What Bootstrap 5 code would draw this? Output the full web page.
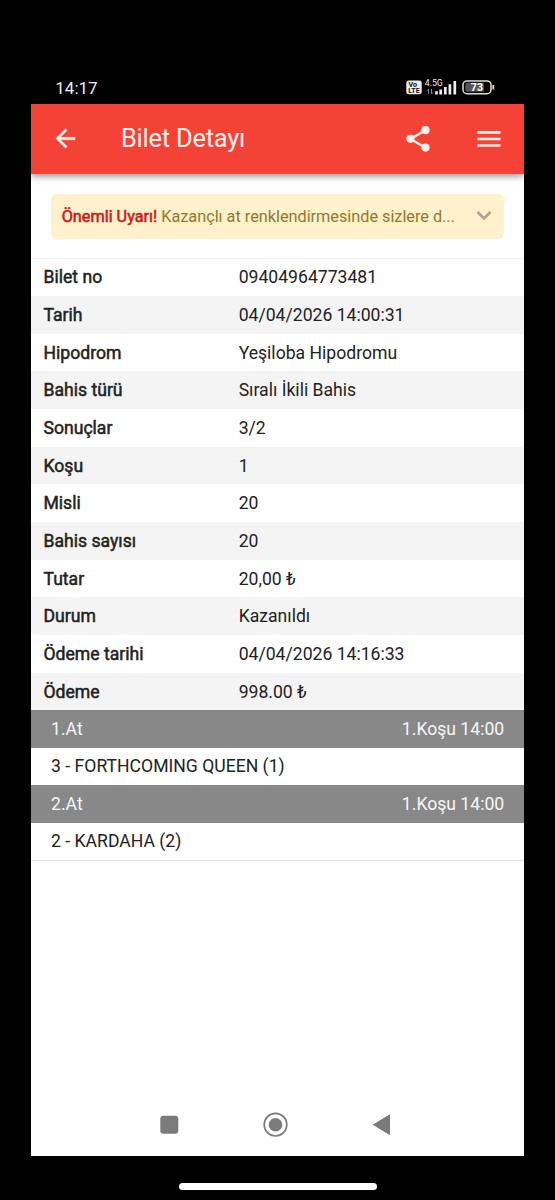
<!DOCTYPE html>
<html lang="tr">
<head>
<meta charset="utf-8">
<meta name="viewport" content="width=device-width, initial-scale=1">
<title>Bilet Detayı</title>
<link href="https://cdn.jsdelivr.net/npm/bootstrap@5.3.0/dist/css/bootstrap.min.css" rel="stylesheet">
<style>
body{background:#000;font-family:Roboto,"Noto Sans",sans-serif;font-size:17.6px;line-height:24px;color:#222;height:1200px;overflow:hidden}
.phone{width:493px;margin-left:30.7px}
.statusbar{height:103.5px;padding:75px 28px 0 24.6px;color:#eee}
.clock{font-size:17px;line-height:26px}
.topbar{height:70.5px;background:#f44336;box-shadow:0 2px 7px rgba(0,0,0,.45);padding:0 21px 0 20.8px;position:relative}
.topbar h1{font-size:25.4px;letter-spacing:-.2px;line-height:32px;font-weight:400;color:#fff0ec;margin:0 0 1px 40.500px}
.screen{background:#fff;height:1052.5px}
.notice{margin:19.5px 19.5px 20px 20px;height:45px;border-radius:6px;background:#fff1cb;color:#8f7a2b;border:0;padding:1px 11px 0;font-size:16.3px;letter-spacing:-.02px}
.notice b{font-weight:400;color:#cf1717;-webkit-text-stroke:.55px #cf1717}
.line{height:37.66px;padding:0 19.5px 0 12.8px}
.details{border-top:1px solid #f4f4f4;margin-top:-1px}
.details .line:nth-child(even){background:#f4f4f4}
.details dt{width:195.2px;font-weight:400;-webkit-text-stroke:.5px #222}
.details dd{margin:0}
.leg{padding-left:20.4px;height:37.55px;padding-bottom:1px}
.leg-head{background:#888;color:#f7f7f7}
.leg-last{border-bottom:1px solid #e4e4e4}
.navkeys{height:62px}
.homebar{width:198px;height:7px;background:#fff;border-radius:4px;margin:27px 0 0 148px}
</style>
</head>
<body>
<div class="phone">
  <div class="statusbar d-flex justify-content-between align-items-start">
    <span class="clock">14:17</span>
    <svg width="90" height="20" viewBox="0 0 90 20" style="margin-top:2px" font-family="Roboto, sans-serif">
      <rect x=".3" y="3.6" width="15.4" height="13.6" rx="2.5" fill="#eee"/>
      <text x="2.6" y="10" font-size="6.8" font-weight="700" fill="#111" textLength="8.500" lengthAdjust="spacingAndGlyphs">Vo</text>
      <text x="2.2" y="16" font-size="6.8" font-weight="700" fill="#111" textLength="11.6" lengthAdjust="spacingAndGlyphs">LTE</text>
      <text x="18.8" y="9.2" font-size="8.8" fill="#eee" textLength="18">4.5G</text>
      <path d="M22.500 17v-5m-1.3 1.5 1.3-1.5M25.500 12v5m1.5-1.5-1.5 1.5" stroke="#888" fill="none"/>
      <path d="M30.500 14.2v3.3M34.700 12.5v5M39.300 10v7.5M43.900 7.3v10.2M48.800 4v13.5" stroke="#eee" stroke-width="2.700"/>
      <rect x="57" y="3.9" width="28" height="12.8" rx="4" fill="none" stroke="#ddd" stroke-width="1.5"/>
      <path d="M59.300 8q0-2.200 2-2.200h16.500v9H61.300q-2 0-2-2.200z" fill="#555"/>
      <path d="M87.300 8v4.500" stroke="#ddd" stroke-width="1.800"/>
      <text x="71" y="14.200" font-size="10.700" font-weight="700" text-anchor="middle" fill="#fff">73</text>
    </svg>
  </div>
  <main class="screen d-flex flex-column">
    <header class="topbar d-flex align-items-center">
      <svg width="29" height="29" viewBox="0 0 24 24" fill="#fff0ec"><path d="M20 11H7.830l5.590-5.590L12 4l-8 8 8 8 1.410-1.410L7.830 13H20z" stroke="#fff0ec" stroke-width=".3"/></svg>
      <h1>Bilet Detayı</h1>
      <svg class="ms-auto" width="30" height="30" viewBox="0 0 30 30" fill="#fff0ec"><path d="M22.800 6 7.500 15l15.300 9" fill="none" stroke="#fff0ec" stroke-width="2.500"/><circle cx="22.500" cy="6.200" r="4.100"/><circle cx="7.500" cy="14.800" r="4.100"/><circle cx="22.500" cy="23.600" r="4.100"/></svg>
      <svg width="28" height="28" viewBox="0 0 28 28" style="margin-left:41.300px"><path d="M2.500 7.400h23M2.500 14h23M2.500 20.500h23" stroke="#fff0ec" stroke-width="2.700"/></svg>
    </header>
    <div class="notice alert d-flex align-items-center flex-shrink-0">
      <span class="text-nowrap"><b>Önemli Uyarı!</b> Kazançlı at renklendirmesinde sizlere d...</span>
      <svg class="ms-auto" width="18" height="12" viewBox="0 0 18 12"><path d="M2.500 1 9 7.500 15.500 1" fill="none" stroke="#aaa292" stroke-width="2.600"/></svg>
    </div>
    <dl class="details mb-0">
      <div class="line d-flex align-items-center"><dt>Bilet no</dt><dd>09404964773481</dd></div>
      <div class="line d-flex align-items-center"><dt>Tarih</dt><dd>04/04/2026 14:00:31</dd></div>
      <div class="line d-flex align-items-center"><dt>Hipodrom</dt><dd>Yeşiloba Hipodromu</dd></div>
      <div class="line d-flex align-items-center"><dt>Bahis türü</dt><dd>Sıralı İkili Bahis</dd></div>
      <div class="line d-flex align-items-center"><dt>Sonuçlar</dt><dd>3/2</dd></div>
      <div class="line d-flex align-items-center"><dt>Koşu</dt><dd>1</dd></div>
      <div class="line d-flex align-items-center"><dt>Misli</dt><dd>20</dd></div>
      <div class="line d-flex align-items-center"><dt>Bahis sayısı</dt><dd>20</dd></div>
      <div class="line d-flex align-items-center"><dt>Tutar</dt><dd>20,00 ₺</dd></div>
      <div class="line d-flex align-items-center"><dt>Durum</dt><dd>Kazanıldı</dd></div>
      <div class="line d-flex align-items-center"><dt>Ödeme tarihi</dt><dd>04/04/2026 14:16:33</dd></div>
      <div class="line d-flex align-items-center"><dt>Ödeme</dt><dd>998.00 ₺</dd></div>
    </dl>
    <section>
      <div class="line leg leg-head d-flex align-items-center justify-content-between"><span>1.At</span><span>1.Koşu 14:00</span></div>
      <div class="line leg d-flex align-items-center">3 - FORTHCOMING QUEEN (1)</div>
      <div class="line leg leg-head d-flex align-items-center justify-content-between"><span>2.At</span><span>1.Koşu 14:00</span></div>
      <div class="line leg leg-last d-flex align-items-center">2 - KARDAHA (2)</div>
    </section>
    <nav class="navkeys mt-auto d-flex justify-content-center align-items-center">
      <svg width="240" height="30" viewBox="0 0 240 30" fill="#7b7b7b"><rect x="3.300" y="5.700" width="18" height="18" rx="3"/><circle cx="118.500" cy="14.700" r="11.300" fill="none" stroke="#7b7b7b" stroke-width="1.700"/><circle cx="118.500" cy="14.700" r="6.800"/><path d="M216.500 14.700 232.500 5v19.500z" stroke="#7b7b7b" stroke-linejoin="round"/></svg>
    </nav>
  </main>
  <div class="homebar"></div>
</div>
<script src="https://cdn.jsdelivr.net/npm/bootstrap@5.3.0/dist/js/bootstrap.bundle.min.js"></script>
</body>
</html>
